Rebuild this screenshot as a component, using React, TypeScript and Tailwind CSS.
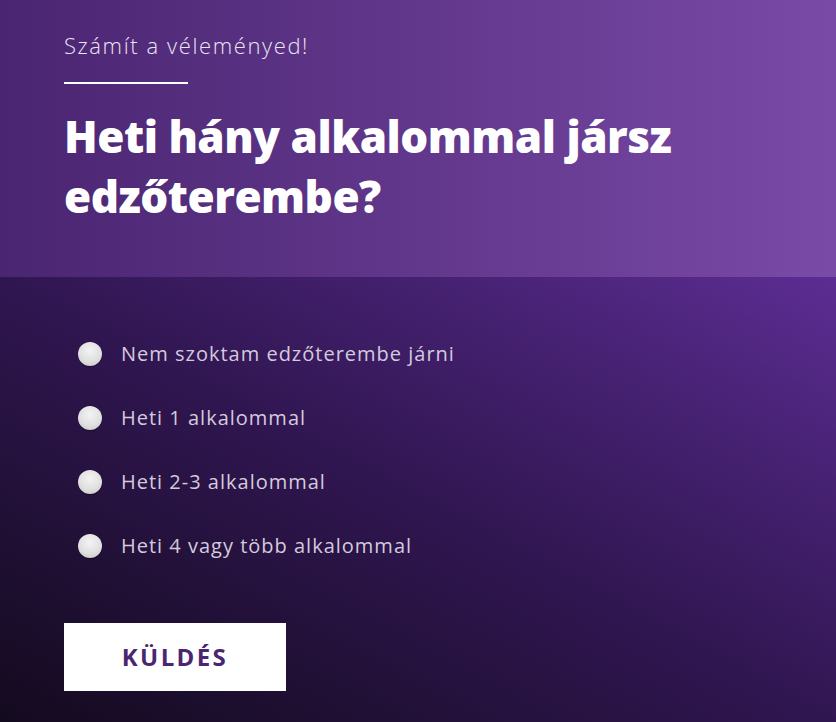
import React from 'react';

const options = [
  'Nem szoktam edzőterembe járni',
  'Heti 1 alkalommal',
  'Heti 2-3 alkalommal',
  'Heti 4 vagy több alkalommal',
];

export default function App() {
  return (
    <div className="w-[836px] h-[722px] overflow-hidden flex flex-col font-['Open_Sans','Lato',sans-serif]">
      {/* Header */}
      <div className="h-[277px] shrink-0 bg-gradient-to-r from-[#4a2571] to-[#7a4aa7] px-16 pt-[30px]">
        <p className="text-[22px] leading-[30px] font-light text-[#ebe4f3] tracking-[1.6px]">Számít a véleményed!</p>
        <div className="mt-[22px] w-[124px] h-[2px] bg-white" />
        <h1 className="mt-[22px] text-[44px] leading-[60px] font-extrabold text-white tracking-[-0.5px]">
          Heti hány alkalommal jársz
          <br />
          edzőterembe?
        </h1>
      </div>

      {/* Body */}
      <div className="flex-1 bg-gradient-to-tr from-[#140a1f] via-[#301651] to-[#5c2d93] px-16 pt-[65px]">
        <div className="flex flex-col gap-[40px] pl-[14px]">
          {options.map((o) => (
            <label key={o} className="flex items-center gap-[19px] h-[24px] cursor-pointer">
              <span className="w-[24px] h-[24px] rounded-full bg-[radial-gradient(circle_at_50%_35%,#f4f4f4,#dedede_60%,#bdbdbd)] shadow-[0_1px_1px_rgba(0,0,0,0.4)]" />
              <span className="text-[20px] text-[#d4cadf] tracking-[1px]">{o}</span>
            </label>
          ))}
        </div>
        <button className="mt-[65px] w-[222px] h-[68px] bg-white text-[#4a2670] text-[24px] font-bold tracking-[2.4px]">
          KÜLDÉS
        </button>
      </div>
    </div>
  );
}
